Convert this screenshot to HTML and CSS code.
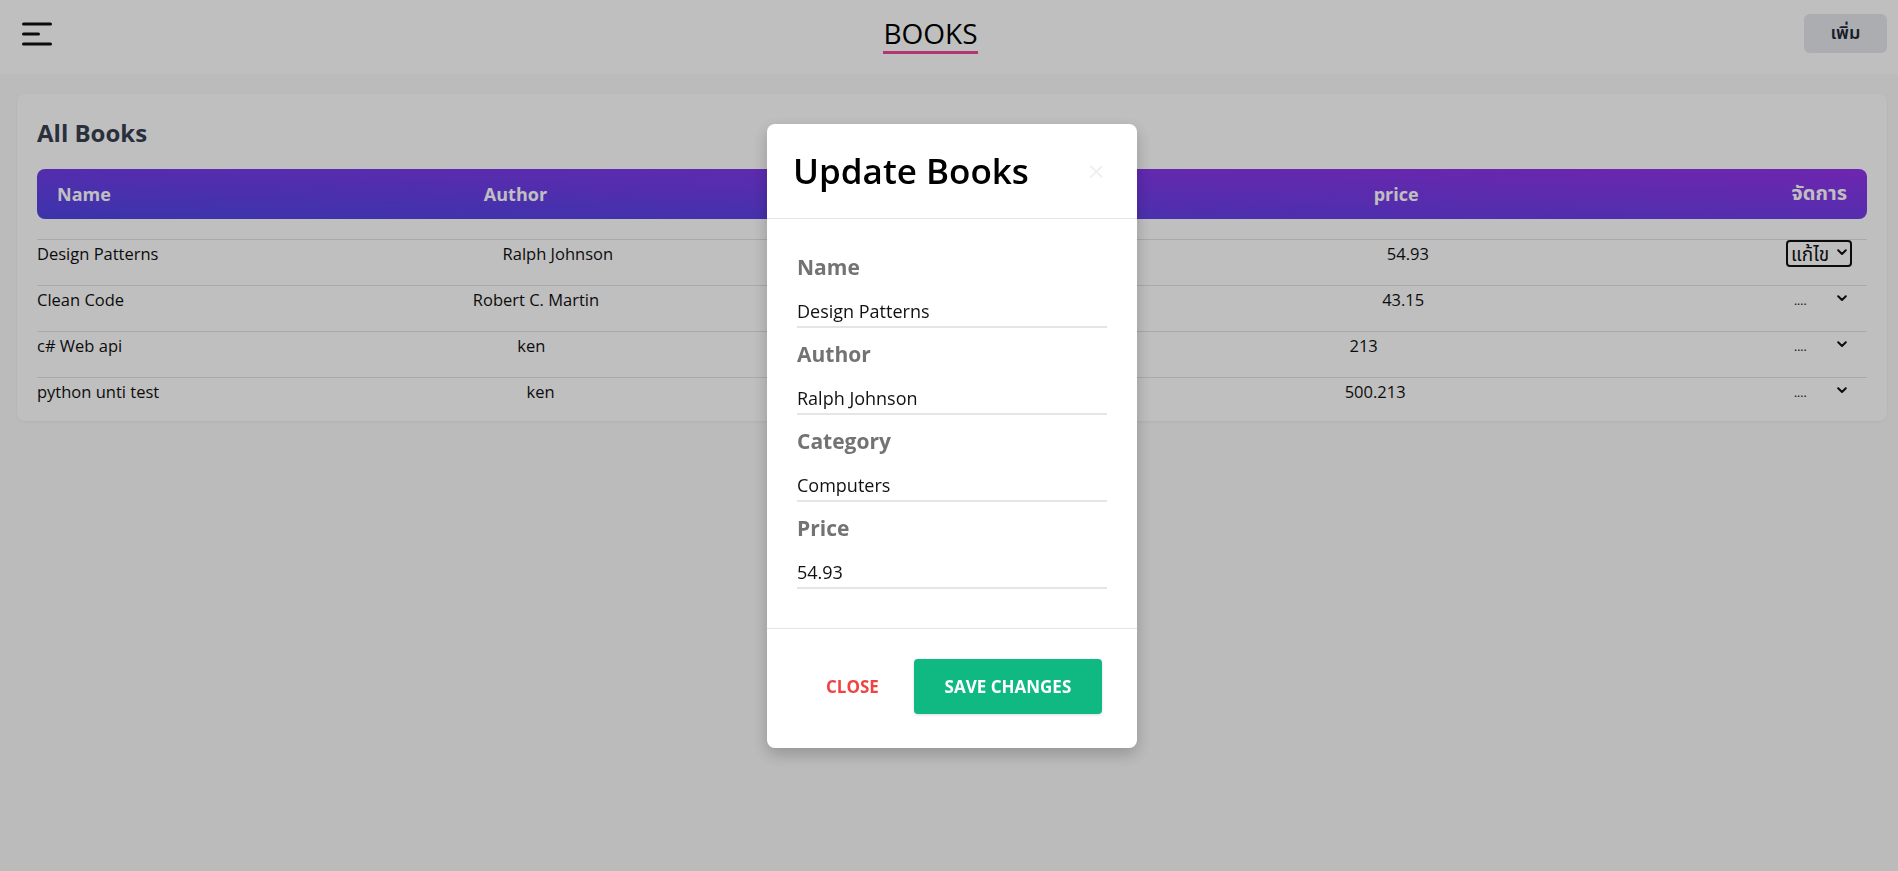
FILE: index.html
```html
<!DOCTYPE html>
<html lang="th">
<head>
<meta charset="utf-8">
<title>Books</title>
<link rel="stylesheet" href="styles.css">
</head>
<body>
<header class="nav">
  <button class="burger" aria-label="menu">
    <svg width="40" height="40" viewBox="0 0 40 40">
      <path d="M6.5 10H33.5M6.5 20H21.5M6.5 30H33.5" stroke="#111" stroke-width="3" stroke-linecap="round" fill="none"/>
    </svg>
  </button>
  <h1 class="brand">BOOKS</h1>
  <button class="add-btn">เพิ่ม</button>
</header>

<main class="main">
  <section class="card">
    <h2 class="card-title">All Books</h2>
    <div class="thead">
      <span>Name</span>
      <span>Author</span>
      <span>Category</span>
      <span>price</span>
      <span class="th-thai">จัดการ</span>
    </div>
    <div class="rows">
      <div class="row">
        <span>Design Patterns</span>
        <span>Ralph Johnson</span>
        <span>Computers</span>
        <span>54.93</span>
        <span class="act"><span class="sel open"><span class="sel-txt">แก้ไข</span><svg class="chev" width="10" height="7" viewBox="0 0 10 7"><path d="M1.2 1.2L5 5L8.8 1.2" stroke="#111" stroke-width="2" fill="none" stroke-linecap="round" stroke-linejoin="round"/></svg></span></span>
      </div>
      <div class="row">
        <span>Clean Code</span>
        <span>Robert C. Martin</span>
        <span>Computers</span>
        <span>43.15</span>
        <span class="act"><span class="sel"><span class="dots">....</span><svg class="chev" width="10" height="7" viewBox="0 0 10 7"><path d="M1.2 1.2L5 5L8.8 1.2" stroke="#111" stroke-width="2" fill="none" stroke-linecap="round" stroke-linejoin="round"/></svg></span></span>
      </div>
      <div class="row">
        <span>c# Web api</span>
        <span>ken</span>
        <span>IT</span>
        <span>213</span>
        <span class="act"><span class="sel"><span class="dots">....</span><svg class="chev" width="10" height="7" viewBox="0 0 10 7"><path d="M1.2 1.2L5 5L8.8 1.2" stroke="#111" stroke-width="2" fill="none" stroke-linecap="round" stroke-linejoin="round"/></svg></span></span>
      </div>
      <div class="row">
        <span>python unti test</span>
        <span>ken</span>
        <span>Testing</span>
        <span>500.213</span>
        <span class="act"><span class="sel"><span class="dots">....</span><svg class="chev" width="10" height="7" viewBox="0 0 10 7"><path d="M1.2 1.2L5 5L8.8 1.2" stroke="#111" stroke-width="2" fill="none" stroke-linecap="round" stroke-linejoin="round"/></svg></span></span>
      </div>
    </div>
  </section>
</main>

<div class="backdrop">
  <div class="modal">
    <div class="modal-head">
      <h3 class="modal-title">Update Books</h3>
      <span class="x">×</span>
    </div>
    <form class="modal-body">
      <div class="field">
        <label class="lbl">Name</label>
        <input class="inp" type="text" value="Design Patterns">
      </div>
      <div class="field">
        <label class="lbl">Author</label>
        <input class="inp" type="text" value="Ralph Johnson">
      </div>
      <div class="field">
        <label class="lbl">Category</label>
        <input class="inp" type="text" value="Computers">
      </div>
      <div class="field">
        <label class="lbl">Price</label>
        <input class="inp" type="text" value="54.93">
      </div>
    </form>
    <div class="modal-foot">
      <button class="btn-close">Close</button>
      <button class="btn-save">Save Changes</button>
    </div>
  </div>
</div>
</body>
</html>
```

FILE: styles.css
```css
* { box-sizing: border-box; }

html, body {
  margin: 0;
  padding: 0;
}

body {
  background: #fafafa;
  font-family: "Open Sans", "Noto Sans Thai", "Noto Sans Thai UI", "Loma", "Garuda", "Tlwg Typo", "Noto Sans", "DejaVu Sans", sans-serif;
  color: #111;
  height: 871px;
  overflow: hidden;
}

/* ---------- navbar ---------- */
.nav {
  height: 74px;
  background: #fff;
  display: flex;
  justify-content: space-between;
  align-items: flex-start;
  padding: 14px 11px 0 17px;
}

.burger {
  width: 40px;
  height: 40px;
  padding: 0;
  border: 0;
  background: transparent;
  display: block;
}
.burger svg { display: block; }

.brand {
  margin: 2px 0 0;
  font-size: 28px;
  font-weight: 500;
  line-height: 35px;
  color: #000;
  border-bottom: 3px solid #ec4899;
}

.add-btn {
  width: 83px;
  height: 39px;
  border: 0;
  border-radius: 6px;
  background: #e5e7eb;
  color: #1f2937;
  font-family: inherit;
  font-size: 18px;
  font-weight: 600;
  padding: 0;
}

/* ---------- card ---------- */
.main {
  padding: 20px 11px 0 17px;
}

.card {
  background: #fff;
  border-radius: 8px;
  padding: 23px 20px 0;
  box-shadow: 0 1px 3px rgba(0,0,0,0.06);
}

.card-title {
  margin: 0 0 20px;
  font-size: 24px;
  line-height: 32px;
  font-weight: 700;
  color: #374151;
}

.thead {
  height: 50px;
  border-radius: 8px;
  padding: 0 20px;
  display: flex;
  justify-content: space-between;
  align-items: center;
  background: linear-gradient(to top right, #4f46e5, #9333ea);
  color: #fff;
  font-size: 18px;
  font-weight: 700;
}
.th-thai { font-size: 20px; }

.rows {
  margin-top: 20px;
}

.row {
  border-top: 1px solid #e2e2e2;
  height: 46px;
  padding-bottom: 18px;
  display: flex;
  justify-content: space-between;
  align-items: center;
  font-size: 16.5px;
  line-height: 24px;
  color: #111;
}
.row:last-child {
  height: 44px;
  padding-bottom: 16px;
}

.act {
  padding: 0 15px 0 13px;
  display: flex;
}

.sel {
  width: 66px;
  height: 27px;
  border: 2px solid transparent;
  border-radius: 4px;
  padding: 0 3px 0 3px;
  display: flex;
  align-items: center;
  justify-content: space-between;
}
.sel.open { border-color: #111; }
.sel-txt { font-size: 19px; line-height: 22px; }
.sel .dots { font-size: 12px; align-self: flex-end; line-height: 20px; padding-left: 3px; }
.chev { display: block; margin-top: -2px; }

/* ---------- modal ---------- */
.backdrop {
  position: fixed;
  inset: 0;
  background: rgba(0,0,0,0.25);
  display: flex;
  justify-content: center;
  align-items: flex-start;
  padding: 124px 0 0 6px;
}

.modal {
  width: 370px;
  background: #fff;
  border-radius: 8px;
  box-shadow: 0 6px 16px rgba(0,0,0,0.22);
}

.modal-head {
  height: 95px;
  border-bottom: 1px solid #e5e5e5;
  padding: 0 32px 0 26px;
  display: flex;
  justify-content: space-between;
  align-items: center;
}

.modal-title {
  margin: 0;
  font-size: 35px;
  line-height: 44px;
  font-weight: 600;
  color: #000;
}

.x {
  font-size: 30px;
  color: #f0f0f0;
  line-height: 1;
}

.modal-body {
  margin: 0;
  padding: 34px 30px 39px;
}

.field { margin-bottom: 12px; }
.field:last-child { margin-bottom: 0; }

.lbl {
  display: block;
  font-size: 21px;
  line-height: 28px;
  font-weight: 700;
  color: #737373;
  margin-bottom: 10px;
}

.inp {
  display: block;
  width: 100%;
  border: 0;
  border-bottom: 2px solid #e5e5e5;
  outline: none;
  background: transparent;
  padding: 8px 0 3px;
  font-family: inherit;
  font-size: 18px;
  line-height: 24px;
  height: 37px;
  color: #111;
}

.modal-foot {
  border-top: 1px solid #e5e5e5;
  padding: 30px 35px 34px;
  display: flex;
  justify-content: flex-end;
  align-items: center;
}

.btn-close {
  height: 55px;
  padding: 0 24px;
  margin-right: 11px;
  border: 0;
  background: transparent;
  color: #ef4444;
  font-family: inherit;
  font-size: 17px;
  font-weight: 700;
  text-transform: uppercase;
}

.btn-save {
  width: 189px;
  height: 55px;
  border: 0;
  border-radius: 4px;
  background: #10b981;
  color: #fff;
  font-family: inherit;
  font-size: 17px;
  font-weight: 700;
  text-transform: uppercase;
  box-shadow: 0 1px 3px rgba(0,0,0,0.15);
}
```
